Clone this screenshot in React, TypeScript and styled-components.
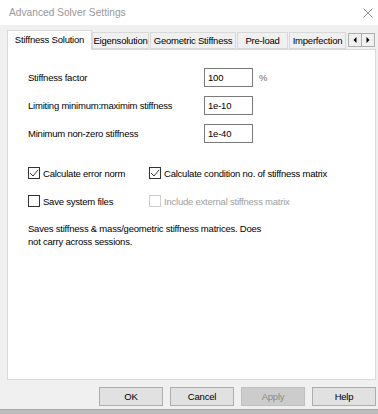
import styled, {createGlobalStyle} from "styled-components";

const GlobalStyle = createGlobalStyle`
  html, body {
    margin: 0;
    padding: 0;
    background: #f0f0f0;
  }
  body {
    font-family: "Liberation Sans", Arial, sans-serif;
    font-size: 9.5px;
    letter-spacing: -0.22px;
    color: #000;
  }
`

const Window = styled.div`
  width: 378px;
  height: 414px;
  display: flex;
  flex-direction: column;
  background: #f0f0f0;
  overflow: hidden;
`

const TitleBar = styled.div`
  height: 25px;
  flex: none;
  display: flex;
  align-items: center;
  justify-content: space-between;
  padding: 0 4px 0 9px;
  background: #ffffff;
  color: #999;
  font-size: 10.2px;
  letter-spacing: 0;
`

const CloseGlyph = styled.svg`
  width: 10px;
  height: 10px;
  margin-right: 1px;
`

const Body = styled.div`
  flex: 1;
  display: flex;
  flex-direction: column;
  padding: 5px 2px 0 7px;
`

const TabStrip = styled.div`
  height: 19px;
  display: flex;
  align-items: flex-end;
  position: relative;
  z-index: 1;
`

const Tab = styled.div<{ $active?: boolean; $w: number }>`
  box-sizing: border-box;
  width: ${p => p.$w}px;
  height: ${p => (p.$active ? 20 : 17)}px;
  margin-bottom: ${p => (p.$active ? -1 : 0)}px;
  margin-right: ${p => (p.$active ? 0 : 1)}px;
  display: flex;
  align-items: center;
  justify-content: center;
  padding-bottom: ${p => (p.$active ? 2 : 0)}px;
  border: 1px solid #d9d9d9;
  border-bottom: ${p => (p.$active ? "none" : "1px solid #d9d9d9")};
  background: ${p => (p.$active ? "#ffffff" : "#f0f0f0")};
  white-space: nowrap;
`

const Scroller = styled.div`
  display: flex;
  margin-left: 1px;
  margin-bottom: 2px;
`

const ScrollButton = styled.div`
  box-sizing: border-box;
  width: 14px;
  height: 14px;
  display: flex;
  align-items: center;
  justify-content: center;
  border: 1px solid #adadad;
  background: #f0f0f0;
  & + & {
    margin-left: -1px;
  }
`

const Panel = styled.div`
  box-sizing: border-box;
  height: 331px;
  background: #ffffff;
  border: 1px solid #d9d9d9;
  padding: 18px 20px 0 20px;
  display: flex;
  flex-direction: column;
`

const FieldRow = styled.div`
  height: 19px;
  display: flex;
  align-items: center;
  & + & {
    margin-top: 9px;
  }
`

const FieldLabel = styled.div`
  width: 176px;
`

const TextBox = styled.div`
  box-sizing: border-box;
  width: 49px;
  height: 19px;
  border: 1px solid #7a7a7a;
  padding: 0 3px;
  display: flex;
  align-items: center;
  background: #fff;
`

const Unit = styled.div`
  margin-left: 6px;
  color: #666;
`

const CheckGrid = styled.div`
  display: grid;
  grid-template-columns: 121px auto;
  row-gap: 16px;
  margin-top: 24px;
`

const CheckItem = styled.div<{ $disabled?: boolean }>`
  display: flex;
  align-items: center;
  height: 12px;
  color: ${p => (p.$disabled ? "#a0a0a0" : "#000")};
  white-space: nowrap;
`

const Box = styled.div<{ $disabled?: boolean }>`
  box-sizing: border-box;
  width: 12px;
  height: 12px;
  margin-right: 3px;
  border: 1px solid ${p => (p.$disabled ? "#cccccc" : "#333333")};
  background: #fff;
  display: flex;
  align-items: center;
  justify-content: center;
`

const Note = styled.div`
  margin-top: 15px;
  width: 245px;
  line-height: 13px;
`

const ButtonRow = styled.div`
  display: flex;
  justify-content: flex-end;
  gap: 7px;
  padding-top: 7px;
`

const Button = styled.div<{ $disabled?: boolean }>`
  box-sizing: border-box;
  width: 64px;
  height: 19px;
  display: flex;
  align-items: center;
  justify-content: center;
  border: 1px solid ${p => (p.$disabled ? "#bfbfbf" : "#adadad")};
  background: ${p => (p.$disabled ? "#cccccc" : "#e1e1e1")};
  color: ${p => (p.$disabled ? "#8a8a8a" : "#000")};
`

const BottomEdge = styled.div`
  margin-top: auto;
  height: 4px;
  background: #bdbdbd;
  border-top: 1px solid #a8a8a8;
`

const Check = ({checked, disabled, label}: { checked?: boolean; disabled?: boolean; label: string }) =>
    <CheckItem $disabled={disabled}>
        <Box $disabled={disabled}>
            {checked && <svg width="10" height="10" viewBox="0 0 10 10">
                <path d="M1 5 L4 8 L9.2 1.8" fill="none" stroke="#222" strokeWidth="0.9"/>
            </svg>}
        </Box>
        {label}
    </CheckItem>

const Arrow = ({dir}: { dir: "left" | "right" }) =>
    <svg width="4" height="6" viewBox="0 0 4 6">
        {dir === "left"
            ? <path d="M3.5 0 L0.5 3 L3.5 6 Z" fill="#000"/>
            : <path d="M0.5 0 L3.5 3 L0.5 6 Z" fill="#000"/>}
    </svg>

const fields = [
    {label: "Stiffness factor", value: "100", unit: "%"},
    {label: "Limiting minimum:maximim stiffness", value: "1e-10"},
    {label: "Minimum non-zero stiffness", value: "1e-40"},
]

const tabs = [
    {name: "Stiffness Solution", w: 85},
    {name: "Eigensolution", w: 57},
    {name: "Geometric Stiffness", w: 86},
    {name: "Pre-load", w: 51},
    {name: "Imperfection", w: 57},
]

const App = () => {
    return <Window>
        <GlobalStyle/>
        <TitleBar>
            <span>Advanced Solver Settings</span>
            <CloseGlyph viewBox="0 0 10 10">
                <path d="M0.5 0.5 L9.5 9.5 M9.5 0.5 L0.5 9.5" stroke="#888" strokeWidth="0.9"/>
            </CloseGlyph>
        </TitleBar>
        <Body>
            <TabStrip>
                {tabs.map((t, i) =>
                    <Tab key={t.name} $w={t.w} $active={i === 0}>{t.name}</Tab>)}
                <Scroller>
                    <ScrollButton><Arrow dir="left"/></ScrollButton>
                    <ScrollButton><Arrow dir="right"/></ScrollButton>
                </Scroller>
            </TabStrip>
            <Panel>
                {fields.map(f =>
                    <FieldRow key={f.label}>
                        <FieldLabel>{f.label}</FieldLabel>
                        <TextBox>{f.value}</TextBox>
                        {f.unit && <Unit>{f.unit}</Unit>}
                    </FieldRow>)}
                <CheckGrid>
                    <Check checked label="Calculate error norm"/>
                    <Check checked label="Calculate condition no. of stiffness matrix"/>
                    <Check label="Save system files"/>
                    <Check disabled label="Include external stiffness matrix"/>
                </CheckGrid>
                <Note>Saves stiffness &amp; mass/geometric stiffness matrices. Does not carry across sessions.</Note>
            </Panel>
            <ButtonRow>
                <Button>OK</Button>
                <Button>Cancel</Button>
                <Button $disabled>Apply</Button>
                <Button>Help</Button>
            </ButtonRow>
        </Body>
        <BottomEdge/>
    </Window>
}

export default App
